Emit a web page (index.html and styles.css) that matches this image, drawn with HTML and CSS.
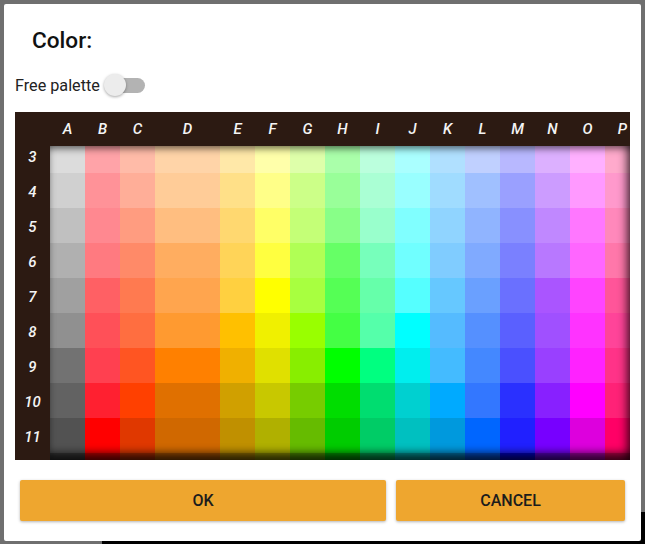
FILE: index.html
```html
<!DOCTYPE html>
<html lang="en">
<head>
    <meta charset="UTF-8">
    <meta name="viewport" content="width=device-width, initial-scale=1.0">
    <title>Color</title>
    <link rel="stylesheet" href="styles.css">
</head>
<body>
    <div class="screen-behind"></div>

    <div class="dialog">
        <div class="dialog-title">Color:</div>

        <div class="free-row">
            <span class="free-label">Free palette</span>
            <div class="switch">
                <div class="switch-track"></div>
                <div class="switch-thumb"></div>
            </div>
        </div>

        <div class="palette">
            <div class="palette-head" id="palette-head">
                <div class="corner"></div>
            </div>
            <div class="palette-body">
                <div class="palette-rows" id="palette-rows"></div>
                <div class="palette-shade"></div>
            </div>
        </div>

        <div class="button-row">
            <button class="dialog-button ok-button">OK</button>
            <button class="dialog-button cancel-button">CANCEL</button>
        </div>
    </div>

    <script>
        // Column letters and their colours, rows 3 to 12
        const columns = [
            ["A", ["#dcdcdc", "#d0d0d0", "#c0c0c0", "#b0b0b0", "#a0a0a0", "#909090", "#727272", "#626262", "#525252", "#3a3a3a"]],
            ["B", ["#ffa3a8", "#ff9298", "#ff8890", "#ff7a80", "#ff6064", "#ff5058", "#ff4050", "#ff2030", "#ff0000", "#cc0000"]],
            ["C", ["#ffbba8", "#ffae98", "#ff9c80", "#ff8a68", "#ff7a50", "#ff6e40", "#ff5522", "#ff4000", "#e03800", "#b02c00"]],
            ["D", ["#ffd4a8", "#ffcc98", "#ffbe80", "#ffad60", "#ffa54e", "#ff9a30", "#ff8000", "#e07000", "#d06800", "#a85200"]],
            ["E", ["#ffe8a8", "#ffe088", "#ffd870", "#ffd458", "#ffd040", "#ffc000", "#f0b000", "#d0a000", "#c09000", "#9a7400"]],
            ["F", ["#ffffaa", "#ffff88", "#ffff66", "#ffff40", "#ffff00", "#f0f000", "#e0e000", "#c8c800", "#b0b000", "#8c8c00"]],
            ["G", ["#deffaa", "#ccff88", "#c4ff77", "#b0ff55", "#a8ff40", "#99ff00", "#88ee00", "#77cc00", "#66bb00", "#509400"]],
            ["H", ["#aaffaa", "#99ff99", "#88ff88", "#66ff66", "#55ff55", "#44ff44", "#00ff00", "#00dd00", "#00cc00", "#00a000"]],
            ["I", ["#bbffdd", "#aaffd4", "#99ffcc", "#77ffbb", "#66ffaa", "#55ffaa", "#00ff80", "#00dd70", "#00cc66", "#00a050"]],
            ["J", ["#aaffff", "#99ffff", "#80ffff", "#70ffff", "#55ffff", "#00ffff", "#00eeee", "#00d0d0", "#00c0c0", "#009a9a"]],
            ["K", ["#b0e0ff", "#a0dcff", "#90d4ff", "#80ccff", "#66c8ff", "#55bbff", "#44bbff", "#00aaff", "#0099dd", "#0078b0"]],
            ["L", ["#c0d0ff", "#a0c0ff", "#90b4ff", "#80aaff", "#6aa0ff", "#5590ff", "#4488ff", "#3377ff", "#0066ff", "#0050d0"]],
            ["M", ["#b8b8ff", "#9aa0ff", "#8890ff", "#7a80ff", "#6a70ff", "#5a60ff", "#4a50ff", "#2a30ff", "#2020ff", "#0000cc"]],
            ["N", ["#dcb0ff", "#cc9cff", "#c088ff", "#b878ff", "#aa55ff", "#a050ff", "#9940ff", "#8820ff", "#7700ff", "#5e00cc"]],
            ["O", ["#ffb0ff", "#ff99ff", "#ff77ff", "#ff66ff", "#ff44ff", "#ff33ff", "#ff22ff", "#ff00ff", "#dd00dd", "#aa00aa"]],
            ["P", ["#ffaacc", "#ff99cc", "#ff88bb", "#ff77aa", "#ff5599", "#ff4499", "#ff3388", "#ff2277", "#ff0066", "#cc0050"]]
        ];

        const head = document.getElementById("palette-head");
        for (const [letter] of columns) {
            const cell = document.createElement("div");
            cell.classList.add("col-name");
            if (letter === "D") cell.classList.add("wide");
            cell.textContent = letter;
            head.appendChild(cell);
        }

        const rows = document.getElementById("palette-rows");
        for (let r = 0; r < 10; r++) {
            const row = document.createElement("div");
            row.classList.add("palette-row");

            // last row is scrolled almost out of view, its number is not shown
            const label = document.createElement("div");
            label.classList.add("row-name");
            if (r < 9) label.textContent = r + 3;
            row.appendChild(label);

            for (const [letter, colors] of columns) {
                const swatch = document.createElement("div");
                swatch.classList.add("swatch");
                if (letter === "D") swatch.classList.add("wide");
                swatch.style.backgroundColor = colors[r];
                row.appendChild(swatch);
            }
            rows.appendChild(row);
        }
    </script>
</body>
</html>
```

FILE: styles.css
```css
body {
    margin: 0;
    width: 645px;
    height: 544px;
    overflow: hidden;
    background-color: #6f6f6f;
    font-family: Roboto, "Liberation Sans", sans-serif;
    position: relative;
}

/* the app screen peeking out under the dialog */
.screen-behind {
    position: absolute;
    left: 102px;
    top: 512px;
    right: 0;
    bottom: 0;
    background-color: #000;
}

.dialog {
    position: relative;
    box-sizing: border-box;
    margin: 4px 0 0 4px;
    width: 637px;
    height: 537px;
    padding: 24px 11px 0 11px;
    background-color: #fff;
    border-radius: 2px;
    display: flex;
    flex-direction: column;
}

.dialog-title {
    margin-left: 17px;
    font-size: 22.6px;
    line-height: 26px;
    font-weight: 500;
    color: #111;
}

.free-row {
    margin-top: 19px;
    height: 24px;
    display: flex;
    flex-direction: row;
    align-items: center;
    gap: 4px;
}

.free-label {
    font-size: 16.2px;
    color: #222;
}

.switch {
    position: relative;
    width: 42px;
    height: 24px;
}

.switch-track {
    position: absolute;
    left: 5px;
    top: 5px;
    width: 36px;
    height: 15px;
    border-radius: 8px;
    background-color: #b3b3b3;
}

.switch-thumb {
    position: absolute;
    left: 0;
    top: 1px;
    width: 22px;
    height: 22px;
    border-radius: 50%;
    background-color: #ececec;
    box-shadow: 0 1px 3px rgba(0, 0, 0, 0.35);
}

.palette {
    margin-top: 15px;
    width: 615px;
    height: 348px;
    overflow: hidden;
    display: flex;
    flex-direction: column;
    background-color: #2c1a12;
}

.palette-head {
    position: relative;
    z-index: 1;
    height: 34px;
    flex-shrink: 0;
    display: flex;
    flex-direction: row;
    background-color: #2c1a12;
}

.corner {
    width: 35px;
    flex-shrink: 0;
}

.col-name,
.row-name {
    width: 35px;
    flex-shrink: 0;
    display: flex;
    align-items: center;
    justify-content: center;
    color: #f4f4f4;
    font-style: italic;
    font-weight: 500;
    font-size: 15px;
}

.col-name.wide,
.swatch.wide {
    width: 65px;
}

.palette-body {
    position: relative;
    flex: 1;
    overflow: hidden;
}

.palette-rows {
    margin-top: -8px;
    display: flex;
    flex-direction: column;
}

.palette-row {
    height: 35px;
    display: flex;
    flex-direction: row;
}

.row-name {
    background-color: #2c1a12;
    padding-top: 2px;
    box-sizing: border-box;
}

.swatch {
    width: 35px;
    flex-shrink: 0;
}

.palette-shade {
    position: absolute;
    left: 35px;
    top: 0;
    right: 0;
    bottom: 0;
    pointer-events: none;
    box-shadow:
        inset -9px 0 8px -5px rgba(0, 0, 0, 0.55),
        inset 0 8px 7px -5px rgba(0, 0, 0, 0.5),
        inset 0 -10px 8px -3px rgba(0, 0, 0, 0.7);
}

.button-row {
    margin: 20px 0 0 5px;
    width: 605px;
    display: flex;
    flex-direction: row;
    gap: 10px;
}

.dialog-button {
    height: 41px;
    border: none;
    border-radius: 2px;
    background-color: #eea62f;
    color: #1c1c1c;
    font-family: Roboto, "Liberation Sans", sans-serif;
    font-weight: 500;
    font-size: 16px;
    box-shadow: 0 1px 3px rgba(0, 0, 0, 0.3);
}

.ok-button {
    width: 366px;
}

.cancel-button {
    width: 229px;
}
```
